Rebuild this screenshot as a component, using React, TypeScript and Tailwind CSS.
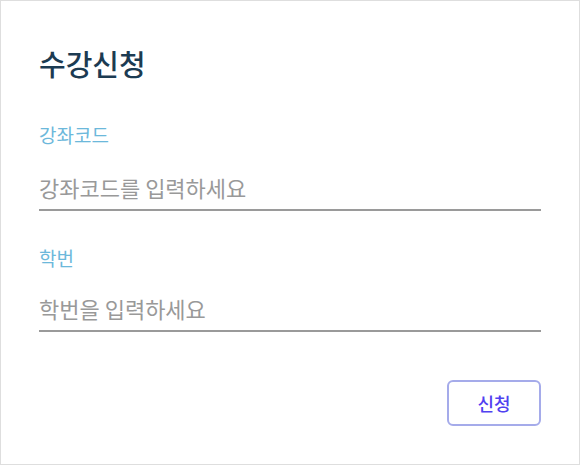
export default function App() {
  return (
    <div
      className="w-[580px] h-[465px] bg-white border border-[#dedede] px-[38px] pt-[42px]"
      style={{ fontFamily: '"Noto Sans CJK KR", "Noto Sans", sans-serif' }}
    >
      <h1 className="text-[29px] leading-[40px] font-medium text-[#1c3b52]">수강신청</h1>

      <div className="mt-[39px]">
        <label className="block text-[19px] leading-[26px] text-[#6cb8db]">강좌코드</label>
        <input
          type="text"
          placeholder="강좌코드를 입력하세요"
          className="mt-[23px] w-full pb-[6px] text-[22px] leading-[32px] border-b-2 border-[#9a9a9a] outline-none placeholder:text-[#999999]"
        />
      </div>

      <div className="mt-[34px]">
        <label className="block text-[19px] leading-[26px] text-[#6cb8db]">학번</label>
        <input
          type="text"
          placeholder="학번을 입력하세요"
          className="mt-[21px] w-full pb-[6px] text-[22px] leading-[32px] border-b-2 border-[#9a9a9a] outline-none placeholder:text-[#999999]"
        />
      </div>

      <div className="flex justify-end mt-[48px]">
        <button className="w-[94px] h-[46px] rounded-[6px] border-2 border-[#a5abea] text-[18px] font-medium text-[#5141f0]">
          신청
        </button>
      </div>
    </div>
  );
}
